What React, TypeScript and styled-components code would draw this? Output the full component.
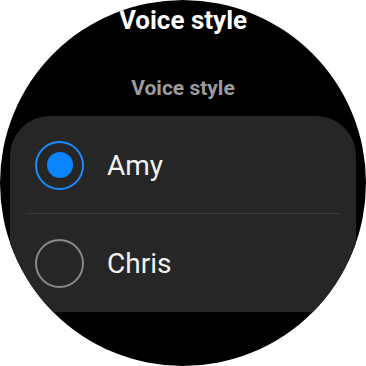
import React from "react";
import styled, { createGlobalStyle } from "styled-components";

const GlobalStyle = createGlobalStyle`
  html, body {
    margin: 0;
    padding: 0;
    background: #ffffff;
  }
  body {
    font-family: Roboto, "Liberation Sans", sans-serif;
  }
`;

// Watch face
const Screen = styled.div`
  width: 366px;
  height: 366px;
  background: #ffffff;
`;

const Face = styled.div`
  width: 366px;
  height: 366px;
  border-radius: 50%;
  background: #000000;
  overflow: hidden;
  display: flex;
  flex-direction: column;
  align-items: center;
`;

const Title = styled.h1`
  margin: 5px 0 0;
  font-size: 26px;
  line-height: 30px;
  font-weight: 700;
  color: #ffffff;
`;

const Subtitle = styled.h2`
  margin: 40px 0 0;
  font-size: 21px;
  line-height: 26px;
  font-weight: 700;
  color: #9b9b9b;
`;

// List card
const Card = styled.ul`
  list-style: none;
  margin: 15px 0 0;
  padding: 0;
  width: 346px;
  background: #262626;
  border-radius: 40px 40px 0 0;
`;

const Row = styled.li<{ $divider?: boolean }>`
  position: relative;
  height: 98px;
  display: flex;
  align-items: center;
  gap: 23px;
  padding-left: 25px;
  box-sizing: border-box;

  ${(p) =>
    p.$divider &&
    `
    &::after {
      content: "";
      position: absolute;
      left: 16px;
      right: 15px;
      bottom: 0;
      height: 1px;
      background: #3a3a3a;
    }
  `}
`;

const Radio = styled.span<{ $checked?: boolean }>`
  width: 49px;
  height: 49px;
  box-sizing: border-box;
  border-radius: 50%;
  border: 2px solid ${(p) => (p.$checked ? "#1a8cff" : "#8a8a8a")};
  display: flex;
  align-items: center;
  justify-content: center;
  flex-shrink: 0;

  &::before {
    content: "";
    display: ${(p) => (p.$checked ? "block" : "none")};
    width: 26px;
    height: 26px;
    border-radius: 50%;
    background: #0a84ff;
  }
`;

const Label = styled.span`
  font-size: 28px;
  font-weight: 400;
  color: #f2f2f2;
`;

const voices = [
  { name: "Amy", checked: true },
  { name: "Chris", checked: false },
];

const App: React.FC = () => {
  return (
    <Screen>
      <GlobalStyle />
      <Face>
        <Title>Voice style</Title>
        <Subtitle>Voice style</Subtitle>
        <Card>
          {voices.map((v, i) => (
            <Row key={v.name} $divider={i < voices.length - 1}>
              <Radio $checked={v.checked} />
              <Label>{v.name}</Label>
            </Row>
          ))}
        </Card>
      </Face>
    </Screen>
  );
};

export default App;
